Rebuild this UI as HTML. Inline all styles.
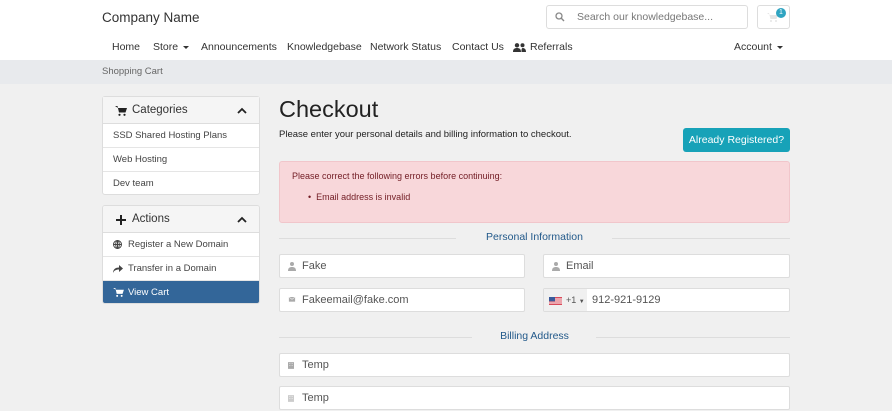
<!DOCTYPE html>
<html><head><style>
*{box-sizing:border-box;margin:0;padding:0}
body{width:892px;height:411px;overflow:hidden;background:#f0f0f0;font-family:"Liberation Sans",sans-serif;color:#333;position:relative}
.a{position:absolute}
.hdr{left:0;top:0;width:892px;height:60px;background:#fff}
.bc{left:0;top:60px;width:892px;height:24px;background:#e8eaed}
.nav{top:41px;font-size:10.5px;color:#333;white-space:nowrap}
.caret{display:inline-block;border-left:3px solid transparent;border-right:3px solid transparent;border-top:3.5px solid #333;vertical-align:middle;margin-left:5px}
.panel{background:#fff;border:1px solid #ddd;border-radius:3px;left:102px;width:158px}
.ph{background:#f5f5f5;height:27px;border-bottom:1px solid #ddd;font-size:11.5px;padding:7px 0 0 13px;position:relative}
.it{height:24px;border-bottom:1px solid #e5e5e5;font-size:9.5px;padding:6px 0 0 10px;color:#444}
.inp{background:#fff;border:1px solid #ddd;border-radius:2px;height:24px;font-size:11px;color:#555;padding:5px 0 0 22px}
.ico{position:absolute;left:8px;top:7px;width:8px;height:9px}
.sec{font-size:10.5px;color:#22598a;text-align:center;left:279px;width:511px}
.line{height:1px;background:#ddd;top:7px;position:absolute}
</style></head><body>
<div class="a hdr"></div>
<div class="a" style="left:102px;top:10px;font-size:13.5px;color:#333">Company Name</div>
<div class="a" style="left:546px;top:5px;width:202px;height:24px;border:1px solid #ddd;border-radius:3px;background:#fff"></div>
<svg class="a" style="left:555px;top:12px" width="10" height="10" viewBox="0 0 10 10"><circle cx="4" cy="4" r="3" fill="none" stroke="#888" stroke-width="1.3"/><path d="M6.3 6.3L9 9" stroke="#888" stroke-width="1.4"/></svg>
<div class="a" style="left:577px;top:11px;font-size:10.5px;color:#777">Search our knowledgebase...</div>
<div class="a" style="left:757px;top:5px;width:33px;height:24px;border:1px solid #ddd;border-radius:3px;background:#fff"></div>
<svg class="a" style="left:767px;top:13px" width="11" height="9" viewBox="0 0 11 9"><path d="M0 0h2l1.5 6h6L11 2H3" fill="#e5e5e5"/><circle cx="4" cy="8" r="1" fill="#e5e5e5"/><circle cx="9" cy="8" r="1" fill="#e5e5e5"/></svg>
<div class="a" style="left:776px;top:8px;width:10px;height:10px;border-radius:50%;background:#2fa4c1;color:#fff;font-size:7px;text-align:center;line-height:10px">1</div>
<div class="a nav" style="left:112px">Home</div>
<div class="a nav" style="left:153px">Store<span class="caret"></span></div>
<div class="a nav" style="left:201px">Announcements</div>
<div class="a nav" style="left:287px">Knowledgebase</div>
<div class="a nav" style="left:370px">Network Status</div>
<div class="a nav" style="left:452px">Contact Us</div>
<svg class="a" style="left:513px;top:43px" width="13" height="9" viewBox="0 0 13 9"><circle cx="4" cy="2.3" r="2.2" fill="#333"/><circle cx="9.5" cy="2.3" r="2" fill="#333"/><path d="M0 9c0-3 1.5-4 4-4s4 1 4 4zM8.5 9c0-2.5 0-3.5 1-4 2 0 3.5 1 3.5 4z" fill="#333"/></svg>
<div class="a nav" style="left:530px">Referrals</div>
<div class="a nav" style="left:734px">Account<span class="caret"></span></div>
<div class="a bc"></div>
<div class="a" style="left:102px;top:66px;font-size:9.5px;color:#666">Shopping Cart</div>

<div class="a panel" style="top:96px;height:99px">
<div class="ph"><span style="margin-left:16px">Categories</span><svg style="position:absolute;left:12px;top:9px" width="12" height="10" viewBox="0 0 12 10"><path d="M0 0h2.5l1.5 6.5h6.5L12 2H3" fill="#222"/><circle cx="4.5" cy="8.8" r="1.1" fill="#222"/><circle cx="9.5" cy="8.8" r="1.1" fill="#222"/></svg><svg style="position:absolute;right:12px;top:10px" width="10" height="7" viewBox="0 0 10 7"><path d="M1 6L5 2l4 4" stroke="#222" stroke-width="1.8" fill="none"/></svg></div>
<div class="it">SSD Shared Hosting Plans</div>
<div class="it">Web Hosting</div>
<div class="it" style="border:0">Dev team</div>
</div>
<div class="a panel" style="top:205px;height:99px;overflow:hidden">
<div class="ph"><span style="margin-left:16px">Actions</span><svg style="position:absolute;left:13px;top:9px" width="10" height="10" viewBox="0 0 10 10"><path d="M5 0v10M0 5h10" stroke="#222" stroke-width="2"/></svg><svg style="position:absolute;right:12px;top:10px" width="10" height="7" viewBox="0 0 10 7"><path d="M1 6L5 2l4 4" stroke="#222" stroke-width="1.8" fill="none"/></svg></div>
<div class="it" style="padding-left:25px;position:relative"><svg style="position:absolute;left:10px;top:7px" width="9" height="9" viewBox="0 0 9 9"><circle cx="4.5" cy="4.5" r="4" fill="none" stroke="#444"/><path d="M0.5 4.5h8M4.5 0.5v8" stroke="#444"/><ellipse cx="4.5" cy="4.5" rx="1.8" ry="4" fill="none" stroke="#444"/></svg>Register a New Domain</div>
<div class="it" style="padding-left:25px;position:relative"><svg style="position:absolute;left:10px;top:7px" width="10" height="9" viewBox="0 0 10 9"><path d="M0 9C0 5 3 3.5 6 3.5V1l4 3.5-4 3.5V5.5C3 5.5 1 6.5 0 9z" fill="#444"/></svg>Transfer in a Domain</div>
<div class="it" style="padding-left:25px;position:relative;background:#336699;color:#fff;border:0"><svg style="position:absolute;left:10px;top:7px" width="11" height="9" viewBox="0 0 12 10"><path d="M0 0h2.5l1.5 6.5h6.5L12 2H3" fill="#fff"/><circle cx="4.5" cy="8.8" r="1.1" fill="#fff"/><circle cx="9.5" cy="8.8" r="1.1" fill="#fff"/></svg>View Cart</div>
</div>

<div class="a" style="left:279px;top:96px;font-size:23.5px;color:#222">Checkout</div>
<div class="a" style="left:279px;top:129px;font-size:9.5px;color:#222">Please enter your personal details and billing information to checkout.</div>
<div class="a" style="left:683px;top:128px;width:107px;height:24px;background:#17a2b8;border-radius:3px;color:#fff;font-size:10.5px;text-align:center;line-height:24px">Already Registered?</div>
<div class="a" style="left:279px;top:161px;width:511px;height:62px;background:#f8d7da;border:1px solid #f1c6cb;border-radius:3px;color:#721c24;font-size:9px;padding:9px 0 0 12px">Please correct the following errors before continuing:<div style="margin:11px 0 0 25px"><span style="margin-left:-9px;margin-right:5px">•</span>Email address is invalid</div></div>

<div class="a sec" style="top:231px"><div class="line" style="left:0;width:177px"></div>Personal Information<div class="line" style="right:0;width:178px"></div></div>
<div class="a inp" style="left:279px;top:254px;width:246px"><svg class="ico" viewBox="0 0 8 9"><circle cx="4" cy="2" r="2" fill="#aaa"/><path d="M0 9c0-3 1.5-4 4-4s4 1 4 4z" fill="#aaa"/></svg>Fake</div>
<div class="a inp" style="left:543px;top:254px;width:247px"><svg class="ico" viewBox="0 0 8 9"><circle cx="4" cy="2" r="2" fill="#aaa"/><path d="M0 9c0-3 1.5-4 4-4s4 1 4 4z" fill="#aaa"/></svg>Email</div>
<div class="a inp" style="left:279px;top:288px;width:246px"><svg class="ico" viewBox="0 0 8 9" style="top:8px;height:7px"><rect width="8" height="6" fill="#aaa"/><path d="M0 0l4 3 4-3" stroke="#fff" fill="none" stroke-width=".7"/></svg>Fakeemail@fake.com</div>
<div class="a inp" style="left:543px;top:288px;width:247px;padding-left:68px"><div style="position:absolute;left:0;top:0;width:43px;height:22px;background:#f0f0f0"></div><svg style="position:absolute;left:5px;top:8px" width="13" height="8" viewBox="0 0 13 8"><rect width="13" height="8" fill="#d84a5a"/><path d="M0 2h13M0 4h13M0 6h13" stroke="#fff" stroke-width=".9"/><rect width="6" height="4.3" fill="#3a5a9a"/></svg><span style="position:absolute;left:22px;top:6px;font-size:9px;color:#555">+1 <span style="font-size:6px">▼</span></span><span style="margin-left:-20px">912-921-9129</span></div>

<div class="a sec" style="top:330px"><div class="line" style="left:0;width:193px"></div>Billing Address<div class="line" style="right:0;width:194px"></div></div>
<div class="a inp" style="left:279px;top:353px;width:511px"><svg class="ico" viewBox="0 0 8 9" style="width:6px"><rect width="8" height="9" fill="#aaa"/><path d="M2 2h1M5 2h1M2 4.5h1M5 4.5h1" stroke="#fff"/></svg>Temp</div>
<div class="a inp" style="left:279px;top:386px;width:511px"><svg class="ico" viewBox="0 0 8 9" style="width:6px"><rect width="8" height="9" fill="#ccc"/><path d="M2 2h1M5 2h1M2 4.5h1M5 4.5h1" stroke="#fff"/></svg>Temp</div>
</body></html>
